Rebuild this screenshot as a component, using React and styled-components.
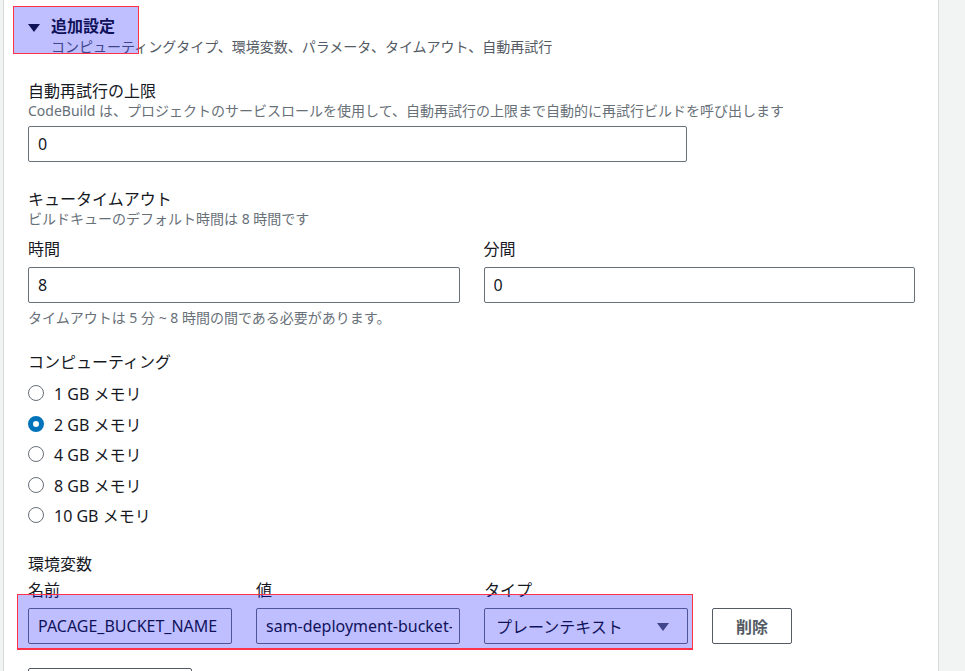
import React from 'react';
import styled, { createGlobalStyle } from 'styled-components';

const GlobalStyle = createGlobalStyle`
    * {
        box-sizing: border-box;
    }
    body {
        margin: 0;
        background: #f2f3f3;
        font-family: "Noto Sans", "Noto Sans CJK JP", sans-serif;
        color: #16191f;
    }
`

const Page = styled.div`
    display: flex;
    padding-left: 3px;
    min-height: 100vh;
`

const Panel = styled.div`
    width: 936px;
    background: #fff;
    border-left: 1px solid #d5dbdb;
    border-right: 1px solid #d5dbdb;
    padding: 0 23px 0 24px;
    overflow: hidden;
`

const ExpandHeader = styled.div`
    position: relative;
    padding-top: 15px;
`

const HeaderRow = styled.div`
    display: flex;
    align-items: center;
    gap: 11px;
    height: 22px;
`

const Caret = styled.svg`
    width: 12px;
    height: 8px;
    flex-shrink: 0;
    margin-top: 3px;
`

const HeaderTitle = styled.span`
    font-size: 16px;
    font-weight: 700;
    line-height: 22px;
`

const HeaderSub = styled.div`
    margin-left: 23px;
    font-size: 14px;
    line-height: 20px;
    color: #545b64;
`

const Highlight = styled.div`
    position: absolute;
    left: ${p => p.$left}px;
    top: ${p => p.$top}px;
    width: ${p => p.$width}px;
    height: ${p => p.$height}px;
    background: rgba(0, 0, 255, 0.25);
    border: 1px solid #ff3347;
    border-bottom-width: ${p => p.$thick ? 2 : 1}px;
    pointer-events: none;
`

const Section = styled.div`
    margin-top: ${p => p.$top}px;
`

const Label = styled.div`
    font-size: 16px;
    line-height: 20px;
    color: #16191f;
    margin-bottom: ${p => p.$after || 0}px;
`

const Description = styled.div`
    font-size: 14px;
    line-height: 20px;
    color: #687078;
    margin-bottom: ${p => p.$after || 0}px;
`

const Hint = styled.div`
    font-size: 14px;
    line-height: 20px;
    color: #687078;
    margin-top: 5px;
`

const TextInput = styled.input`
    display: block;
    width: ${p => p.$width ? `${p.$width}px` : '100%'};
    height: 36px;
    padding: 0 7px 0 9px;
    border: 1px solid #687078;
    border-radius: 2px;
    background: #fff;
    font-family: inherit;
    font-size: 16px;
    color: #16191f;
    outline: none;
`

const TwoCols = styled.div`
    display: grid;
    grid-template-columns: 1fr 1fr;
    column-gap: 24px;
`

const RadioList = styled.div`
    display: flex;
    flex-direction: column;
    margin-top: 6px;
`

const RadioRow = styled.label`
    display: flex;
    align-items: center;
    gap: 10px;
    height: 30.5px;
    font-size: 16px;
`

const RadioDot = styled.span`
    width: 16px;
    height: 16px;
    border-radius: 50%;
    background: #fff;
    border: ${p => p.$checked ? '5px solid #0073bb' : '1.5px solid #687078'};
    flex-shrink: 0;
`

const EnvGrid = styled.div`
    position: relative;
    display: grid;
    grid-template-columns: 204px 204px 204px 80px;
    column-gap: 24px;
    row-gap: 8px;
    align-items: center;
`

const ColHead = styled.div`
    font-size: 16px;
    line-height: 20px;
`

const Select = styled.div`
    display: flex;
    align-items: center;
    justify-content: space-between;
    height: 36px;
    padding: 0 18px 0 11px;
    border: 1px solid #687078;
    border-radius: 2px;
    background: #fff;
    font-size: 16px;
`

const Button = styled.button`
    height: 36px;
    width: ${p => p.$width}px;
    background: #fff;
    border: 1px solid #545b64;
    border-radius: 2px;
    font-family: inherit;
    font-size: 16px;
    font-weight: 700;
    color: #545b64;
`

const AddButton = styled(Button)`
    display: block;
    margin-top: 24px;
`

const memoryOptions = ['1 GB メモリ', '2 GB メモリ', '4 GB メモリ', '8 GB メモリ', '10 GB メモリ'];

function DownCaret({ color }) {
    return (
        <Caret viewBox="0 0 12 8">
            <polygon points="0,0 12,0 6,8" fill={color} />
        </Caret>
    )
}

export default function App() {
    return (
        <Page>
            <GlobalStyle />
            <Panel>
                <ExpandHeader>
                    <HeaderRow>
                        <DownCaret color="#16191f" />
                        <HeaderTitle>追加設定</HeaderTitle>
                    </HeaderRow>
                    <HeaderSub>コンピューティングタイプ、環境変数、パラメータ、タイムアウト、自動再試行</HeaderSub>
                    <Highlight $left={-15} $top={6} $width={126} $height={48} />
                </ExpandHeader>

                <Section $top={24}>
                    <Label>自動再試行の上限</Label>
                    <Description $after={5}>CodeBuild は、プロジェクトのサービスロールを使用して、自動再試行の上限まで自動的に再試行ビルドを呼び出します</Description>
                    <TextInput $width={659} readOnly value="0" />
                </Section>

                <Section $top={27}>
                    <Label>キュータイムアウト</Label>
                    <Description $after={10}>ビルドキューのデフォルト時間は 8 時間です</Description>
                    <TwoCols>
                        <div>
                            <Label $after={8}>時間</Label>
                            <TextInput readOnly value="8" />
                        </div>
                        <div>
                            <Label $after={8}>分間</Label>
                            <TextInput readOnly value="0" />
                        </div>
                    </TwoCols>
                    <Hint>タイムアウトは 5 分 ~ 8 時間の間である必要があります。</Hint>
                </Section>

                <Section $top={24}>
                    <Label>コンピューティング</Label>
                    <RadioList>
                        {memoryOptions.map((opt, i) => (
                            <RadioRow key={opt}>
                                <RadioDot $checked={i === 1} />
                                {opt}
                            </RadioRow>
                        ))}
                    </RadioList>
                </Section>

                <Section $top={23}>
                    <Label $after={6}>環境変数</Label>
                    <EnvGrid>
                        <ColHead>名前</ColHead>
                        <ColHead>値</ColHead>
                        <ColHead>タイプ</ColHead>
                        <div />
                        <TextInput readOnly value="PACAGE_BUCKET_NAME" />
                        <TextInput readOnly value="sam-deployment-bucket-20210101" />
                        <Select>
                            プレーンテキスト
                            <DownCaret color="#545b64" />
                        </Select>
                        <Button $width={80}>削除</Button>
                        <Highlight $left={-11} $top={14} $width={676} $height={56} $thick />
                    </EnvGrid>
                    <AddButton $width={164}>環境変数の追加</AddButton>
                </Section>
            </Panel>
        </Page>
    )
}
